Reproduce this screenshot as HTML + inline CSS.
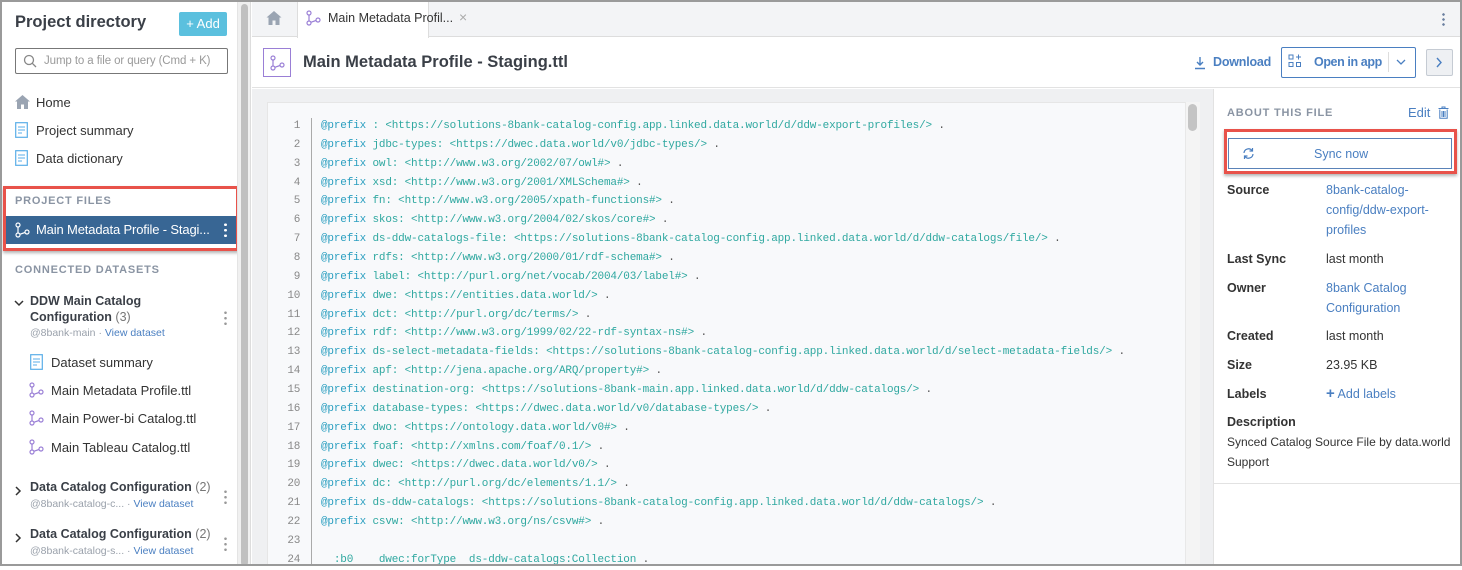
<!DOCTYPE html>
<html><head><meta charset="utf-8">
<style>
*{box-sizing:border-box;margin:0;padding:0}
body{width:1462px;height:566px;overflow:hidden;font-family:"Liberation Sans",sans-serif;color:#333;background:#fff;position:relative}
.a{position:absolute}
.frame{left:0;top:0;width:1462px;height:566px;border:2px solid #9a9a9a;pointer-events:none;z-index:50}
.side{left:0;top:0;width:238px;height:566px;background:#fff}
.nav{font-size:13px;color:#333;white-space:nowrap}
.sec{font-size:11px;font-weight:bold;letter-spacing:.8px;color:#8a94a3}
.lnk{color:#4a7fc1}
.muted{color:#9aa1ab}
.code{font-family:"Liberation Mono",monospace;font-size:11px;letter-spacing:-0.17px;white-space:pre;line-height:18.86px}
.kw{color:#2b9fc0}
.tx{color:#2fa8a0}
.num{font-family:"Liberation Mono",monospace;font-size:11px;color:#888;text-align:right;line-height:18.86px;width:30px;letter-spacing:-0.3px}
.lbl{font-size:12.5px;font-weight:bold;color:#333}
.val{font-size:12.5px;color:#333;line-height:20px}
</style></head><body>
<div class="a frame"></div>

<div class="a side">
  <div class="a" style="left:15px;top:13px;font-size:16.5px;font-weight:bold;color:#3a3f47">Project directory</div>
  <div class="a" style="left:179px;top:12px;width:48px;height:24px;background:#5bc0de;border-radius:2px;color:#fff;font-size:13px;line-height:24px;text-align:center">+ Add</div>
  <div class="a" style="left:15px;top:48px;width:213px;height:26px;border:1px solid #777;border-radius:2px;overflow:hidden">
    <svg class="a" style="left:7px;top:5px" width="14" height="14" viewBox="0 0 14 14"><circle cx="6" cy="6" r="4.5" fill="none" stroke="#888" stroke-width="1.3"/><line x1="9.3" y1="9.3" x2="13" y2="13" stroke="#888" stroke-width="1.3"/></svg>
    <div class="a" style="left:28px;top:6px;font-size:11.5px;color:#9a9a9a;white-space:nowrap;letter-spacing:-0.1px">Jump to a file or query (Cmd + K)</div>
  </div>
  <svg class="a" style="left:15px;top:95px" width="15" height="14" viewBox="0 0 15 14"><path d="M7.5 0L0 6.5H2V14H6V9.5H9V14H13V6.5H15Z" fill="#9aa4b2"/></svg>
  <div class="a nav" style="left:36px;top:95px">Home</div>
  <svg class="a" style="left:15px;top:122px" width="13" height="16" viewBox="0 0 13 16"><rect x=".7" y=".7" width="11.6" height="14.6" fill="none" stroke="#5aaee8" stroke-width="1.2"/><path d="M3 5H10M3 8H10M3 11H7" stroke="#5aaee8" stroke-width="1"/></svg>
  <div class="a nav" style="left:36px;top:123px">Project summary</div>
  <svg class="a" style="left:15px;top:150px" width="13" height="16" viewBox="0 0 13 16"><rect x=".7" y=".7" width="11.6" height="14.6" fill="none" stroke="#5aaee8" stroke-width="1.2"/><path d="M3 5H10M3 8H10M3 11H7" stroke="#5aaee8" stroke-width="1"/></svg>
  <div class="a nav" style="left:36px;top:151px">Data dictionary</div>

  <div class="a" style="left:3px;top:186px;width:236px;height:65px;border:3px solid #e8524a;box-shadow:0 2px 3px rgba(0,0,0,.3)"></div>
  <div class="a sec" style="left:15px;top:195px">PROJECT FILES</div>
  <div class="a" style="left:6px;top:216px;width:230px;height:28px;background:#386694"></div>
  <svg class="a" style="left:14px;top:222px" width="16" height="16" viewBox="0 0 16 16"><circle cx="4" cy="3" r="2" fill="none" stroke="#fff" stroke-width="1.2"/><circle cx="4" cy="13" r="2" fill="none" stroke="#fff" stroke-width="1.2"/><circle cx="13" cy="10" r="2" fill="none" stroke="#fff" stroke-width="1.2"/><path d="M4 5V11M5.8 12.3L11 10.5" stroke="#fff" stroke-width="1.2" fill="none"/></svg>
  <div class="a nav" style="left:36px;top:222px;color:#fff;letter-spacing:-0.15px">Main Metadata Profile - Stagi...</div>
  <div class="a" style="left:224px;top:222px;width:3px;height:16px;background:radial-gradient(circle,#fff 1.3px,transparent 1.5px) 0 0/3px 5.5px repeat-y"></div>

  <div class="a sec" style="left:15px;top:264px">CONNECTED DATASETS</div>
  <svg class="a" style="left:14px;top:299px" width="10" height="8" viewBox="0 0 10 8"><path d="M1 2L5 6L9 2" fill="none" stroke="#333" stroke-width="1.5"/></svg>
  <div class="a" style="left:30px;top:293px;font-size:12.5px;font-weight:bold;color:#3a3f47;line-height:16px">DDW Main Catalog<br>Configuration <span style="font-weight:normal;color:#777">(3)</span></div>
  <div class="a" style="left:224px;top:310px;width:3px;height:16px;background:radial-gradient(circle,#999 1.2px,transparent 1.4px) 0 0/3px 5.5px repeat-y"></div>
  <div class="a" style="left:30px;top:327px;font-size:10.5px;white-space:nowrap"><span class="muted">@8bank-main · </span><span class="lnk">View dataset</span></div>
  <svg class="a" style="left:30px;top:354px" width="13" height="16" viewBox="0 0 13 16"><rect x=".7" y=".7" width="11.6" height="14.6" fill="none" stroke="#5aaee8" stroke-width="1.2"/><path d="M3 5H10M3 8H10M3 11H7" stroke="#5aaee8" stroke-width="1"/></svg>
  <div class="a nav" style="left:51px;top:355px">Dataset summary</div>
  <div class="a nav" style="left:51px;top:383px">Main Metadata Profile.ttl</div>
  <div class="a nav" style="left:51px;top:411px">Main Power-bi Catalog.ttl</div>
  <div class="a nav" style="left:51px;top:440px">Main Tableau Catalog.ttl</div>
  <svg class="a" style="left:28px;top:382px" width="16" height="16" viewBox="0 0 16 16"><g fill="none" stroke="#9a7fd6" stroke-width="1.2"><circle cx="4" cy="3" r="2"/><circle cx="4" cy="13" r="2"/><circle cx="13" cy="10" r="2"/><path d="M4 5V11M5.8 12.3L11 10.5"/></g></svg>
  <svg class="a" style="left:28px;top:410px" width="16" height="16" viewBox="0 0 16 16"><g fill="none" stroke="#9a7fd6" stroke-width="1.2"><circle cx="4" cy="3" r="2"/><circle cx="4" cy="13" r="2"/><circle cx="13" cy="10" r="2"/><path d="M4 5V11M5.8 12.3L11 10.5"/></g></svg>
  <svg class="a" style="left:28px;top:439px" width="16" height="16" viewBox="0 0 16 16"><g fill="none" stroke="#9a7fd6" stroke-width="1.2"><circle cx="4" cy="3" r="2"/><circle cx="4" cy="13" r="2"/><circle cx="13" cy="10" r="2"/><path d="M4 5V11M5.8 12.3L11 10.5"/></g></svg>

  <svg class="a" style="left:14px;top:486px" width="8" height="10" viewBox="0 0 8 10"><path d="M2 1L6 5L2 9" fill="none" stroke="#333" stroke-width="1.5"/></svg>
  <div class="a" style="left:30px;top:480px;font-size:12.5px;font-weight:bold;color:#3a3f47;white-space:nowrap">Data Catalog Configuration <span style="font-weight:normal;color:#777">(2)</span></div>
  <div class="a" style="left:224px;top:489px;width:3px;height:16px;background:radial-gradient(circle,#999 1.2px,transparent 1.4px) 0 0/3px 5.5px repeat-y"></div>
  <div class="a" style="left:30px;top:498px;font-size:10.5px;white-space:nowrap"><span class="muted">@8bank-catalog-c... · </span><span class="lnk">View dataset</span></div>
  <svg class="a" style="left:14px;top:533px" width="8" height="10" viewBox="0 0 8 10"><path d="M2 1L6 5L2 9" fill="none" stroke="#333" stroke-width="1.5"/></svg>
  <div class="a" style="left:30px;top:527px;font-size:12.5px;font-weight:bold;color:#3a3f47;white-space:nowrap">Data Catalog Configuration <span style="font-weight:normal;color:#777">(2)</span></div>
  <div class="a" style="left:224px;top:536px;width:3px;height:16px;background:radial-gradient(circle,#999 1.2px,transparent 1.4px) 0 0/3px 5.5px repeat-y"></div>
  <div class="a" style="left:30px;top:545px;font-size:10.5px;white-space:nowrap"><span class="muted">@8bank-catalog-s... · </span><span class="lnk">View dataset</span></div>
</div>
<div class="a" style="left:237px;top:0;width:14px;height:566px;background:#f0f0f0;border-left:1px solid #e4e4e4;border-right:1px solid #ddd"></div>
<div class="a" style="left:241px;top:4px;width:7px;height:562px;background:#c0c0c0;border-radius:4px"></div>

<div class="a" style="left:252px;top:0;width:1210px;height:37px;background:#f3f4f6;border-bottom:1px solid #ddd"></div>
<svg class="a" style="left:266px;top:11px" width="16" height="14" viewBox="0 0 15 14"><path d="M7.5 0L0 6.5H2V14H6V9.5H9V14H13V6.5H15Z" fill="#9aa4b2"/></svg>
<div class="a" style="left:297px;top:2px;width:132px;height:36px;background:#fff;border-left:1px solid #ddd;border-right:1px solid #ddd"></div>
<svg class="a" style="left:305px;top:10px" width="16" height="16" viewBox="0 0 16 16"><g fill="none" stroke="#9a7fd6" stroke-width="1.2"><circle cx="4" cy="3" r="2"/><circle cx="4" cy="13" r="2"/><circle cx="13" cy="10" r="2"/><path d="M4 5V11M5.8 12.3L11 10.5"/></g></svg>
<div class="a" style="left:328px;top:11px;font-size:12.5px;color:#333;white-space:nowrap">Main Metadata Profil...</div>
<div class="a" style="left:459px;top:9px;font-size:14px;color:#aaa">×</div>
<div class="a" style="left:1442px;top:12px;width:3px;height:14px;background:radial-gradient(circle,#6a7fa0 1.2px,transparent 1.4px) 0 0/3px 5px repeat-y"></div>

<div class="a" style="left:252px;top:38px;width:1210px;height:50px;background:#fff;border-bottom:1px solid #e2e2e2"></div>
<div class="a" style="left:263px;top:48px;width:28px;height:29px;border:1.5px solid #9a7fd6;background:#fff"></div>
<svg class="a" style="left:269px;top:55px" width="16" height="16" viewBox="0 0 16 16"><g fill="none" stroke="#9a7fd6" stroke-width="1.2"><circle cx="4" cy="3" r="2"/><circle cx="4" cy="13" r="2"/><circle cx="13" cy="10" r="2"/><path d="M4 5V11M5.8 12.3L11 10.5"/></g></svg>
<div class="a" style="left:303px;top:53px;font-size:16.5px;font-weight:bold;color:#3a3f47;white-space:nowrap">Main Metadata Profile - Staging.ttl</div>
<svg class="a" style="left:1194px;top:56px" width="12" height="14" viewBox="0 0 12 14"><path d="M6 1V9M3 6L6 9L9 6M1 12.5H11" fill="none" stroke="#4a7fc1" stroke-width="1.4"/></svg>
<div class="a" style="left:1213px;top:55px;font-size:12.5px;font-weight:bold;color:#4a7fc1;letter-spacing:-0.2px">Download</div>
<div class="a" style="left:1281px;top:47px;width:135px;height:31px;border:1px solid #4a7fc1;border-radius:2px;background:#fff"></div>
<svg class="a" style="left:1288px;top:54px" width="14" height="14" viewBox="0 0 14 14"><g fill="none" stroke="#4a7fc1" stroke-width="1"><rect x="1" y="1" width="4" height="4"/><rect x="1" y="8.5" width="4" height="4"/><rect x="8.5" y="8.5" width="4" height="4"/><path d="M10.5 0.5V5.5M8 3H13"/></g></svg>
<div class="a" style="left:1314px;top:55px;font-size:12.5px;font-weight:bold;color:#4a7fc1;letter-spacing:-0.4px;white-space:nowrap">Open in app</div>
<div class="a" style="left:1388px;top:52px;width:1px;height:20px;background:#ddd"></div>
<svg class="a" style="left:1396px;top:59px" width="10" height="7" viewBox="0 0 10 7"><path d="M1 1L5 5L9 1" fill="none" stroke="#4a7fc1" stroke-width="1.3"/></svg>
<div class="a" style="left:1426px;top:49px;width:27px;height:27px;border:1px solid #c5cbd3;border-radius:2px;background:#eef0f3"></div>
<svg class="a" style="left:1435px;top:57px" width="8" height="11" viewBox="0 0 8 11"><path d="M2 1L6 5.5L2 10" fill="none" stroke="#4a7fc1" stroke-width="1.4"/></svg>

<div class="a" style="left:252px;top:89px;width:962px;height:477px;background:#eff0f2"></div>
<div class="a" style="left:267px;top:102px;width:933px;height:464px;background:#f8f9fb;border-left:1px solid #e6e6e6;border-top:1px solid #e6e6e6"></div>
<div class="a" style="left:1185px;top:102px;width:15px;height:464px;background:#f4f4f4;border-left:1px solid #e8e8e8"></div>
<div class="a" style="left:1188px;top:104px;width:9px;height:27px;background:#c4c4c4;border-radius:5px"></div>
<div class="a" style="left:311px;top:118px;width:1px;height:448px;background:#aaa"></div>
<div class="a num" style="left:270px;top:117px">1<br>2<br>3<br>4<br>5<br>6<br>7<br>8<br>9<br>10<br>11<br>12<br>13<br>14<br>15<br>16<br>17<br>18<br>19<br>20<br>21<br>22<br>23<br>24</div>
<div class="a code tx" style="left:321px;top:117px"><span class="kw">@prefix</span> : &lt;https://solutions-8bank-catalog-config.app.linked.data.world/d/ddw-export-profiles/&gt; <span style="color:#555">.</span>
<span class="kw">@prefix</span> jdbc-types: &lt;https://dwec.data.world/v0/jdbc-types/&gt; <span style="color:#555">.</span>
<span class="kw">@prefix</span> owl: &lt;http://www.w3.org/2002/07/owl#&gt; <span style="color:#555">.</span>
<span class="kw">@prefix</span> xsd: &lt;http://www.w3.org/2001/XMLSchema#&gt; <span style="color:#555">.</span>
<span class="kw">@prefix</span> fn: &lt;http://www.w3.org/2005/xpath-functions#&gt; <span style="color:#555">.</span>
<span class="kw">@prefix</span> skos: &lt;http://www.w3.org/2004/02/skos/core#&gt; <span style="color:#555">.</span>
<span class="kw">@prefix</span> ds-ddw-catalogs-file: &lt;https://solutions-8bank-catalog-config.app.linked.data.world/d/ddw-catalogs/file/&gt; <span style="color:#555">.</span>
<span class="kw">@prefix</span> rdfs: &lt;http://www.w3.org/2000/01/rdf-schema#&gt; <span style="color:#555">.</span>
<span class="kw">@prefix</span> label: &lt;http://purl.org/net/vocab/2004/03/label#&gt; <span style="color:#555">.</span>
<span class="kw">@prefix</span> dwe: &lt;https://entities.data.world/&gt; <span style="color:#555">.</span>
<span class="kw">@prefix</span> dct: &lt;http://purl.org/dc/terms/&gt; <span style="color:#555">.</span>
<span class="kw">@prefix</span> rdf: &lt;http://www.w3.org/1999/02/22-rdf-syntax-ns#&gt; <span style="color:#555">.</span>
<span class="kw">@prefix</span> ds-select-metadata-fields: &lt;https://solutions-8bank-catalog-config.app.linked.data.world/d/select-metadata-fields/&gt; <span style="color:#555">.</span>
<span class="kw">@prefix</span> apf: &lt;http://jena.apache.org/ARQ/property#&gt; <span style="color:#555">.</span>
<span class="kw">@prefix</span> destination-org: &lt;https://solutions-8bank-main.app.linked.data.world/d/ddw-catalogs/&gt; <span style="color:#555">.</span>
<span class="kw">@prefix</span> database-types: &lt;https://dwec.data.world/v0/database-types/&gt; <span style="color:#555">.</span>
<span class="kw">@prefix</span> dwo: &lt;https://ontology.data.world/v0#&gt; <span style="color:#555">.</span>
<span class="kw">@prefix</span> foaf: &lt;http://xmlns.com/foaf/0.1/&gt; <span style="color:#555">.</span>
<span class="kw">@prefix</span> dwec: &lt;https://dwec.data.world/v0/&gt; <span style="color:#555">.</span>
<span class="kw">@prefix</span> dc: &lt;http://purl.org/dc/elements/1.1/&gt; <span style="color:#555">.</span>
<span class="kw">@prefix</span> ds-ddw-catalogs: &lt;https://solutions-8bank-catalog-config.app.linked.data.world/d/ddw-catalogs/&gt; <span style="color:#555">.</span>
<span class="kw">@prefix</span> csvw: &lt;http://www.w3.org/ns/csvw#&gt; <span style="color:#555">.</span>

  :b0    dwec:forType  ds-ddw-catalogs:Collection <span style="color:#555">.</span></div>

<div class="a" style="left:1213px;top:89px;width:249px;height:477px;background:#fff;border-left:1px solid #e2e2e2"></div>
<div class="a sec" style="left:1227px;top:107px">ABOUT THIS FILE</div>
<div class="a" style="left:1408px;top:105px;font-size:13px;color:#4a7fc1">Edit</div>
<svg class="a" style="left:1438px;top:106px" width="11" height="13" viewBox="0 0 11 13"><path d="M0.5 2.5H10.5M4 2.5V1H7V2.5M1.8 3.5V12.3H9.2V3.5M4 5V11M5.5 5V11M7 5V11" fill="none" stroke="#4a7fc1" stroke-width="1"/></svg>
<div class="a" style="left:1224px;top:129px;width:233px;height:45px;border:3px solid #e8524a;box-shadow:0 2px 3px rgba(0,0,0,.3)"></div>
<div class="a" style="left:1228px;top:138px;width:224px;height:31px;border:1px solid #5a83b8;background:#fff"></div>
<svg class="a" style="left:1242px;top:147px" width="13" height="13" viewBox="0 0 13 13"><g fill="none" stroke="#4a7fc1" stroke-width="1.2"><path d="M2 6A4.5 4.5 0 0 1 10 3.5"/><path d="M11 7A4.5 4.5 0 0 1 3 9.5"/><path d="M10.5 1V4H7.5"/><path d="M2.5 12V9H5.5"/></g></svg>
<div class="a" style="left:1314px;top:147px;font-size:12.5px;color:#4a7fc1">Sync now</div>

<div class="a lbl" style="left:1227px;top:183px">Source</div>
<div class="a val lnk" style="left:1326px;top:180px;color:#4a7fc1">8bank-catalog-<br>config/ddw-export-<br>profiles</div>
<div class="a lbl" style="left:1227px;top:252px">Last Sync</div>
<div class="a val" style="left:1326px;top:249px">last month</div>
<div class="a lbl" style="left:1227px;top:281px">Owner</div>
<div class="a val" style="left:1326px;top:278px;color:#4a7fc1">8bank Catalog<br>Configuration</div>
<div class="a lbl" style="left:1227px;top:329px">Created</div>
<div class="a val" style="left:1326px;top:326px">last month</div>
<div class="a lbl" style="left:1227px;top:358px">Size</div>
<div class="a val" style="left:1326px;top:355px">23.95 KB</div>
<div class="a lbl" style="left:1227px;top:387px">Labels</div>
<div class="a val" style="left:1326px;top:384px;color:#4a7fc1"><b style="font-size:15px">+</b> Add labels</div>
<div class="a lbl" style="left:1227px;top:415px">Description</div>
<div class="a val" style="left:1227px;top:432px;font-size:12px;white-space:nowrap">Synced Catalog Source File by data.world<br>Support</div>
<div class="a" style="left:1214px;top:483px;width:248px;height:1px;background:#e2e2e2"></div>
</body></html>
